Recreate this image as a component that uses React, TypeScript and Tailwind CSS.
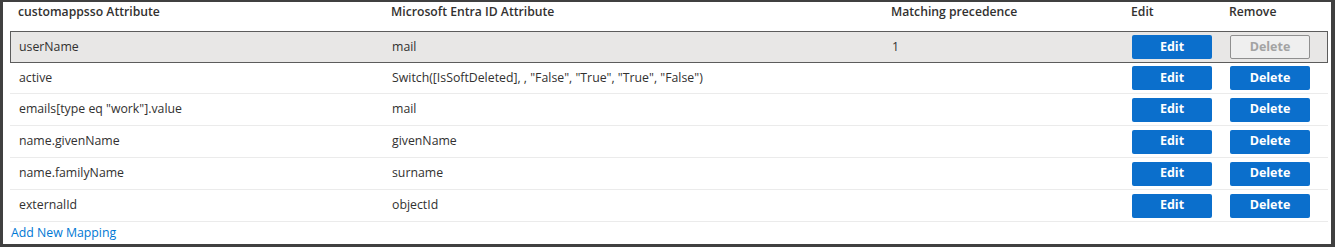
import React from "react";

const rows = [
  { a: "userName", b: "mail", c: "1", selected: true },
  { a: "active", b: 'Switch([IsSoftDeleted], , "False", "True", "True", "False")', c: "" },
  { a: 'emails[type eq "work"].value', b: "mail", c: "" },
  { a: "name.givenName", b: "givenName", c: "" },
  { a: "name.familyName", b: "surname", c: "" },
  { a: "externalId", b: "objectId", c: "" },
];

function Cells({ a, b, c, selected }: { a: string; b: string; c: string; selected?: boolean }) {
  return (
    <>
      <div className="w-[373px] pl-[8px] shrink-0">{a}</div>
      <div className="w-[500px] pl-[8px] shrink-0">{b}</div>
      <div className="w-[240px] pl-[8px] shrink-0">{c}</div>
      <div className="w-[98px] pl-[8px] shrink-0 flex items-center">
        <button className="w-[80px] h-[24px] rounded-[2px] bg-[#0b6fcc] text-white font-bold text-[12.5px] leading-none flex items-center justify-center">
          Edit
        </button>
      </div>
      <div className="w-[106px] pl-[8px] shrink-0 flex items-center">
        {selected ? (
          <button className="w-[80px] h-[24px] rounded-[2px] bg-[#efefef] border border-[#8f8f8f] text-[#a3a3a3] font-bold text-[12.5px] leading-none flex items-center justify-center">
            Delete
          </button>
        ) : (
          <button className="w-[80px] h-[24px] rounded-[2px] bg-[#0b6fcc] text-white font-bold text-[12.5px] leading-none flex items-center justify-center">
            Delete
          </button>
        )}
      </div>
    </>
  );
}

export default function App() {
  return (
    <div className="w-[1335px] h-[247px] bg-[#404040] pl-[3px] pt-[2px] pr-[4px] pb-[3px] font-['Open_Sans',sans-serif] text-[12.3px] text-[#323130]">
      <div className="w-full h-full bg-white pl-[7px] pr-[3px]">
        <div className="flex h-[29px] leading-[20px] font-semibold text-[12.2px]">
          <div className="w-[373px] pl-[8px] shrink-0">customappsso Attribute</div>
          <div className="w-[500px] pl-[8px] shrink-0">Microsoft Entra ID Attribute</div>
          <div className="w-[240px] pl-[8px] shrink-0">Matching precedence</div>
          <div className="w-[98px] pl-[8px] shrink-0">Edit</div>
          <div className="w-[106px] pl-[8px] shrink-0">Remove</div>
        </div>
        {rows.map((r, i) =>
          r.selected ? (
            <div key={i} className="flex items-center h-[32px] bg-[#e8e7e6] border border-[#5c5c5c]">
              <Cells {...r} />
            </div>
          ) : (
            <div
              key={i}
              className={`flex items-center border-b border-[#ebebeb] ${i === 1 ? "h-[31px]" : "h-[32px]"}`}
            >
              <div className="flex items-center ml-[1px]">
                <Cells {...r} />
              </div>
            </div>
          )
        )}
        <div className="leading-[20px] pt-[1px] pl-[1px] text-[#0078d4]">Add New Mapping</div>
      </div>
    </div>
  );
}
